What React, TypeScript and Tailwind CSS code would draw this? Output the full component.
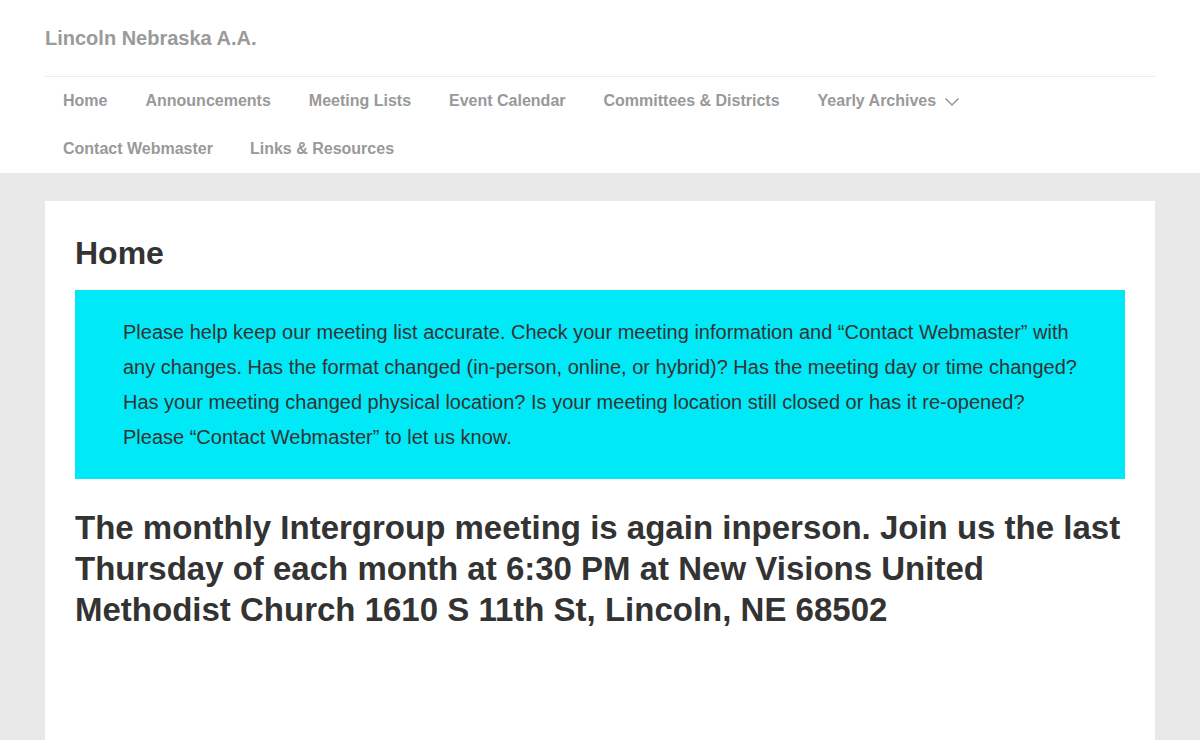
import React from "react";

const font = { fontFamily: '"Liberation Sans", Arial, sans-serif' };

function Chevron() {
  return (
    <svg width="16" height="10" viewBox="0 0 16 10" fill="none" className="ml-[8px] mt-[2px]">
      <path d="M1.5 1.5 L8 8 L14.5 1.5" stroke="#999" strokeWidth="1.5" />
    </svg>
  );
}

export default function App() {
  const row1 = ["Home", "Announcements", "Meeting Lists", "Event Calendar", "Committees & Districts"];
  return (
    <div style={font} className="min-h-[740px] bg-[#e9e9e9]">
      <header className="bg-white px-[45px]">
        <div className="h-[77px] flex items-center border-b border-[#ececec]">
          <span className="text-[20px] font-bold text-[#9a9a9a] leading-none">Lincoln Nebraska A.A.</span>
        </div>
        <nav className="flex flex-wrap">
          {row1.map((t, i) => (
            <a
              key={t}
              className={
                i === 0
                  ? "h-[48px] flex items-center pl-[18px] pr-[19px] text-[16px] font-bold text-[#999]"
                  : "h-[48px] flex items-center px-[19px] text-[16px] font-bold text-[#999]"
              }
            >
              {t}
            </a>
          ))}
          <a className="h-[48px] flex items-center px-[19px] text-[16px] font-bold text-[#999]">
            Yearly Archives
            <Chevron />
          </a>
          <a className="h-[48px] flex items-center px-[18px] text-[16px] font-bold text-[#999]">Contact Webmaster</a>
          <a className="h-[48px] flex items-center px-[19px] text-[16px] font-bold text-[#999]">Links &amp; Resources</a>
        </nav>
      </header>
      <main className="px-[45px] pt-[28px]">
        <div className="bg-white px-[30px] pt-[34px] pb-[110px]">
          <h1 className="text-[32px] leading-[36px] font-bold text-[#333]">Home</h1>
          <div className="mt-[19px] bg-[#00e9f7] pl-[48px] pr-[40px] pt-[25px] pb-[24px]">
            <p className="text-[20px] leading-[35px] text-[#333]">
              Please help keep our meeting list accurate. Check your meeting information and “Contact Webmaster” with
              any changes. Has the format changed (in-person, online, or hybrid)? Has the meeting day or time changed?
              Has your meeting changed physical location? Is your meeting location still closed or has it re-opened?
              Please “Contact Webmaster” to let us know.
            </p>
          </div>
          <h2 className="mt-[28px] text-[33px] leading-[41px] font-bold text-[#333]">
            The monthly Intergroup meeting is again inperson. Join us the last Thursday of each month at 6:30 PM at New
            Visions United Methodist Church 1610 S 11th St, Lincoln, NE 68502
          </h2>
        </div>
      </main>
    </div>
  );
}
